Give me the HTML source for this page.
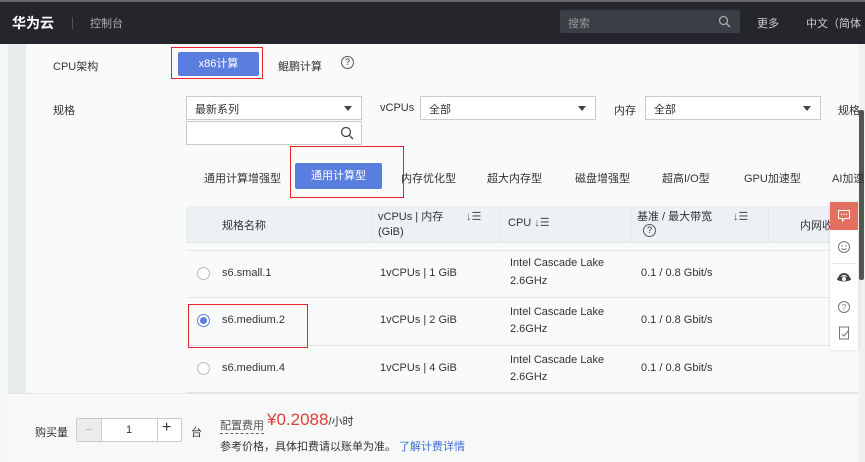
<!DOCTYPE html>
<html><head><meta charset="utf-8"><style>
*{margin:0;padding:0;box-sizing:border-box}
body{width:865px;height:462px;overflow:hidden;position:relative;background:#f6f8f7;font-family:"Liberation Sans","Noto Sans CJK SC",sans-serif;font-size:11px;color:#333}
.a{position:absolute;white-space:nowrap}
.sel{position:absolute;height:24px;border:1px solid #c8cacc;background:#fff;padding:4px 8px;font-size:11px}
.sel:after{content:"";position:absolute;right:9px;top:9px;border:4px solid transparent;border-top:5px solid #444}
.hl{position:absolute;border:1.5px solid #e8232b}
.hr{position:absolute;height:1px;background:#e3e6e8}
.vr{position:absolute;width:1px;background:#e3e6e8}
.radio{position:absolute;width:13px;height:13px;border:1px solid #bbb;border-radius:50%;background:#fff}
.sort{font-size:11px;color:#555}
</style></head><body>
<div class="a" style="left:0;top:0;width:865px;height:44px;background:#24262c;border-top:2px solid #666"></div>
<div class="a" style="left:12px;top:13px;color:#fff;font-size:14px;font-weight:bold">华为云</div>
<div class="a" style="left:72px;top:17px;width:1px;height:12px;background:#555"></div>
<div class="a" style="left:90px;top:15px;color:#aaa;font-size:11px">控制台</div>
<div class="a" style="left:560px;top:10px;width:180px;height:23px;background:#3b3e45;border-radius:2px"></div>
<div class="a" style="left:568px;top:15px;color:#999;font-size:11px">搜索</div>
<svg class="a" style="left:718px;top:15px" width="13" height="13" viewBox="0 0 13 13"><circle cx="5.5" cy="5.5" r="4" fill="none" stroke="#aaa" stroke-width="1.3"/><path d="M8.5 8.5L12 12" stroke="#aaa" stroke-width="1.3"/></svg>
<div class="a" style="left:757px;top:15px;color:#ccc;font-size:11px">更多</div>
<div class="a" style="left:806px;top:15px;color:#ccc;font-size:11px">中文（简体</div>
<div class="a" style="left:8px;top:44px;width:18px;height:349px;background:#e8eced"></div>
<div class="a" style="left:26px;top:44px;width:832px;height:349px;background:#f9fbfa"></div>
<div class="a" style="left:859px;top:44px;width:6px;height:418px;background:#f0f0f0"></div>
<div class="a" style="left:859px;top:110px;width:5px;height:170px;background:#555;border-radius:2px"></div>

<div class="a" style="left:53px;top:58px">CPU架构</div>
<div class="a" style="left:178px;top:52px;width:81px;height:24px;background:#5a7ee0;color:#fff;text-align:center;line-height:24px;border-radius:2px">x86计算</div>
<div class="hl" style="left:171px;top:47px;width:92px;height:32px"></div>
<div class="a" style="left:278px;top:58px">鲲鹏计算</div>
<div class="a" style="left:341px;top:56px;width:13px;height:13px;border:1px solid #555;border-radius:50%;font-size:9px;text-align:center;line-height:11px">?</div>

<div class="a" style="left:53px;top:102px">规格</div>
<div class="sel" style="left:186px;top:96px;width:176px">最新系列</div>
<div class="a" style="left:186px;top:121px;width:176px;height:24px;border:1px solid #c8cacc;background:#fff"></div>
<svg class="a" style="left:340px;top:126px" width="14" height="14" viewBox="0 0 14 14"><circle cx="6" cy="6" r="4.5" fill="none" stroke="#444" stroke-width="1.3"/><path d="M9.3 9.3L13 13" stroke="#444" stroke-width="1.3"/></svg>
<div class="a" style="left:380px;top:102px">vCPUs</div>
<div class="sel" style="left:420px;top:96px;width:176px">全部</div>
<div class="a" style="left:614px;top:102px">内存</div>
<div class="sel" style="left:645px;top:96px;width:176px">全部</div>
<div class="a" style="left:838px;top:102px">规格</div>

<div class="a" style="left:204px;top:170px">通用计算增强型</div>
<div class="a" style="left:295px;top:163px;width:87px;height:26px;background:#5a7ee0;color:#fff;text-align:center;line-height:26px;border-radius:2px">通用计算型</div>
<div class="hl" style="left:290px;top:146px;width:114px;height:52px"></div>
<div class="a" style="left:401px;top:170px">内存优化型</div>
<div class="a" style="left:487px;top:170px">超大内存型</div>
<div class="a" style="left:575px;top:170px">磁盘增强型</div>
<div class="a" style="left:662px;top:170px">超高I/O型</div>
<div class="a" style="left:744px;top:170px">GPU加速型</div>
<div class="a" style="left:832px;top:170px">AI加速</div>

<div class="a" style="left:186px;top:206px;width:672px;height:36px;background:#eef1f4"></div>
<div class="vr" style="left:371px;top:206px;height:36px"></div>
<div class="vr" style="left:500px;top:206px;height:36px"></div>
<div class="vr" style="left:630px;top:206px;height:36px"></div>
<div class="vr" style="left:768px;top:206px;height:36px"></div>
<div class="a" style="left:222px;top:217px">规格名称</div>
<div class="a" style="left:378px;top:208px">vCPUs | 内存</div>
<div class="a" style="left:378px;top:226px">(GiB)</div>
<div class="a sort" style="left:466px;top:210px">↓☰</div>
<div class="a" style="left:508px;top:216px">CPU <span class="sort">↓☰</span></div>
<div class="a" style="left:637px;top:208px">基准 / 最大带宽</div>
<div class="a" style="left:643px;top:224px;width:13px;height:13px;border:1px solid #555;border-radius:50%;font-size:9px;text-align:center;line-height:11px">?</div>
<div class="a sort" style="left:733px;top:210px">↓☰</div>
<div class="a" style="left:800px;top:217px">内网收</div>
<div class="hr" style="left:186px;top:242px;width:672px"></div>
<div class="hr" style="left:186px;top:250px;width:672px"></div>
<div class="hr" style="left:186px;top:297px;width:672px"></div>
<div class="hr" style="left:186px;top:345px;width:672px"></div>
<div class="hr" style="left:186px;top:392px;width:672px"></div>

<div class="radio" style="left:197px;top:267px"></div>
<div class="a" style="left:222px;top:267px">s6.small.1</div>
<div class="a" style="left:380px;top:267px">1vCPUs | 1 GiB</div>
<div class="a" style="left:510px;top:257px">Intel Cascade Lake</div>
<div class="a" style="left:510px;top:275px">2.6GHz</div>
<div class="a" style="left:641px;top:267px">0.1 / 0.8 Gbit/s</div>

<div class="radio" style="left:197px;top:314px;border-color:#5a7ee0"><div style="position:absolute;left:2px;top:2px;width:7px;height:7px;border-radius:50%;background:#5a7ee0"></div></div>
<div class="a" style="left:222px;top:314px">s6.medium.2</div>
<div class="hl" style="left:188px;top:304px;width:120px;height:44px"></div>
<div class="a" style="left:380px;top:314px">1vCPUs | 2 GiB</div>
<div class="a" style="left:510px;top:306px">Intel Cascade Lake</div>
<div class="a" style="left:510px;top:323px">2.6GHz</div>
<div class="a" style="left:641px;top:314px">0.1 / 0.8 Gbit/s</div>

<div class="radio" style="left:197px;top:362px"></div>
<div class="a" style="left:222px;top:362px">s6.medium.4</div>
<div class="a" style="left:380px;top:362px">1vCPUs | 4 GiB</div>
<div class="a" style="left:510px;top:354px">Intel Cascade Lake</div>
<div class="a" style="left:510px;top:371px">2.6GHz</div>
<div class="a" style="left:641px;top:362px">0.1 / 0.8 Gbit/s</div>

<div class="a" style="left:830px;top:202px;width:28px;height:148px;background:#fff;box-shadow:0 0 3px rgba(0,0,0,.15)"></div>
<div class="a" style="left:830px;top:202px;width:28px;height:28px;background:#e3705f"></div>
<svg class="a" style="left:837px;top:209px" width="14" height="14" viewBox="0 0 14 14"><path d="M1.5 1.5h11v8h-5l-2 2.5v-2.5h-4z" fill="none" stroke="#fff" stroke-width="1.1"/><circle cx="4.5" cy="5.5" r=".7" fill="#fff"/><circle cx="7" cy="5.5" r=".7" fill="#fff"/><circle cx="9.5" cy="5.5" r=".7" fill="#fff"/></svg>
<svg class="a" style="left:837px;top:240px" width="14" height="14" viewBox="0 0 14 14"><circle cx="7" cy="7" r="5.5" fill="none" stroke="#777" stroke-width="1"/><circle cx="5" cy="6" r=".7" fill="#777"/><circle cx="9" cy="6" r=".7" fill="#777"/><path d="M4.5 8.5q2.5 2 5 0" fill="none" stroke="#777"/></svg>
<div class="hr" style="left:832px;top:263px;width:24px"></div>
<svg class="a" style="left:836px;top:271px" width="16" height="14" viewBox="0 0 16 14"><path d="M3 8a5 5 0 0 1 10 0" fill="none" stroke="#444" stroke-width="2"/><ellipse cx="8" cy="8" rx="7" ry="2.5" fill="#444"/><circle cx="8" cy="8" r="2" fill="#fff"/></svg>
<svg class="a" style="left:837px;top:300px" width="14" height="14" viewBox="0 0 14 14"><circle cx="7" cy="7" r="5.5" fill="none" stroke="#777"/><text x="7" y="10" font-size="8" text-anchor="middle" fill="#777" font-family="Liberation Sans">?</text></svg>
<svg class="a" style="left:838px;top:326px" width="13" height="14" viewBox="0 0 13 14"><path d="M1.5 1h9v12h-9z" fill="none" stroke="#777"/><path d="M4 8l2 2 5-6" fill="none" stroke="#777"/></svg>

<div class="a" style="left:8px;top:393px;width:851px;height:69px;background:#f7f9f8;border-top:1px solid #e2e5e6"></div>
<div class="a" style="left:35px;top:424px">购买量</div>
<div class="a" style="left:76px;top:418px;width:106px;height:24px;border:1px solid #c8cacc;background:#fff;border-radius:2px"></div>
<div class="a" style="left:77px;top:419px;width:24px;height:22px;background:#ececec;color:#bbb;text-align:center;line-height:21px;font-size:13px">−</div>
<div class="a" style="left:101px;top:419px;width:1px;height:22px;background:#c8cacc"></div>
<div class="a" style="left:157px;top:419px;width:1px;height:22px;background:#c8cacc"></div>
<div class="a" style="left:126px;top:424px">1</div>
<div class="a" style="left:162px;top:419px;font-size:16px;color:#333">+</div>
<div class="a" style="left:191px;top:424px">台</div>
<div class="a" style="left:220px;top:417px;border-bottom:1px dashed #666;color:#555">配置费用</div>
<div class="a" style="left:267px;top:410px;color:#e0403c;font-size:17px">¥0.2088<span style="font-size:11px;color:#333">/小时</span></div>
<div class="a" style="left:220px;top:438px">参考价格，具体扣费请以账单为准。 <span style="color:#3d6fd8">了解计费详情</span></div>
</body></html>
